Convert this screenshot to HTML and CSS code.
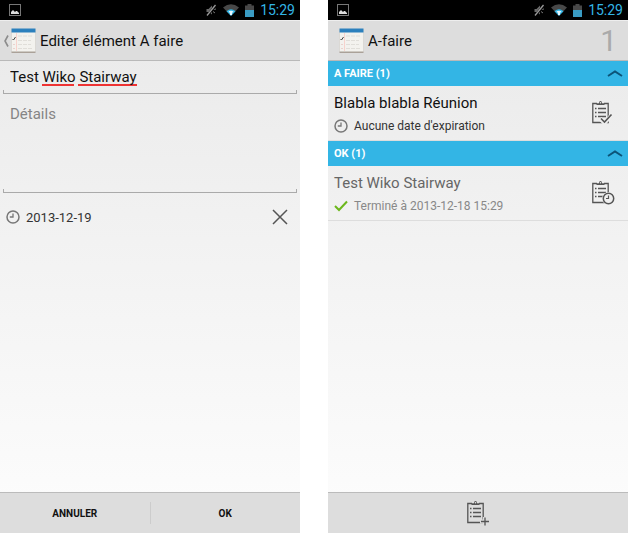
FILE: index.html
```html
<!DOCTYPE html>
<html lang="fr">
<head>
  <meta charset="UTF-8">
  <meta name="viewport" content="width=device-width, initial-scale=1.0">
  <title>A-faire</title>
  <link rel="stylesheet" href="styles.css">
</head>
<body>

<!-- icônes partagées -->
<svg class="sprite" width="0" height="0" aria-hidden="true">
  <symbol id="picture" viewBox="0 0 12 12">
    <rect x="0.5" y="0.5" width="11" height="11" fill="none" stroke="#777"/>
    <path d="M2 10V8l2-2 2 2 1-1h1l2 2v1z" fill="#ddd"/>
  </symbol>
  <symbol id="mute" viewBox="0 0 12 12">
    <path d="M1.500 5h2L7 1.500v9L3.500 8h-2z" fill="#6a6a6a"/>
    <path d="M8 5.500l3-0.500M8 7.500l2 1.500" stroke="#777" fill="none"/>
    <path d="M2 12L11 1" stroke="#000" stroke-width="2.500"/>
    <path d="M2 11.500L10.500 1" stroke="#999" stroke-width="1.300"/>
  </symbol>
  <symbol id="wifi" viewBox="0 0 16 12">
    <path d="M0 3.500Q8 -3 16 3.500L8 12z" fill="#484848"/>
    <path d="M3.500 7.200Q8 3.500 12.500 7.200L8 12z" fill="#33b5e5"/>
    <path d="M5.500 7.500Q8 6 10.500 7.500L9 9v2H7V9z" fill="#e6f7ff"/>
  </symbol>
  <symbol id="battery" viewBox="0 0 9 13">
    <path d="M2.500 0h4v1.500H9V6H0V1.500h2.500z" fill="#484848"/>
    <path d="M0 6h9v7H0z" fill="#3a9cc4"/>
  </symbol>
  <symbol id="app" viewBox="0 0 25 26">
    <path d="M0.500 1h24v24h-24z" fill="#aaa198"/>
    <path d="M0.500 1h24v22.500h-24z" fill="#f3f2ee"/>
    <path d="M0.500 0.500h24V4.500h-24z" fill="#2c80bd"/>
    <path d="M5.500 5v18" stroke="#f7d3cd"/>
    <path d="M7 8h15M7 12.500h13M7 16.500h13M7 20.500h15" stroke="#e0ded9" stroke-dasharray="4 1"/>
    <path d="M1.500 11l1 1 2-3" stroke="#444" fill="none"/>
    <path d="M2 16.500h2M2 20.500h2" stroke="#ead2ce"/>
  </symbol>
  <symbol id="clock" viewBox="0 0 14 14">
    <circle cx="7" cy="7" r="6" fill="none" stroke="currentColor" stroke-width="1.500"/>
    <path d="M7 3.500V7H3.800" fill="none" stroke="currentColor" stroke-width="1.300"/>
  </symbol>
  <symbol id="chevron" viewBox="0 0 16 8">
    <path d="M1 6L8 1.500l7 4.500" fill="none" stroke="#0c5478" stroke-width="2"/>
  </symbol>
  <symbol id="board" viewBox="0 0 24 26">
    <path d="M6 3.500H1.800v19h15.400v-19H13" fill="none" stroke="currentColor" stroke-width="1.300"/>
    <path d="M5.500 5V3.300H8Q8 1 9.500 1T11 3.300h2.500V5z" fill="currentColor"/>
    <circle cx="9.500" cy="2.700" r="0.700" fill="#eee"/>
    <path d="M4 8.500h1.500M4 12.500h1.500M4 16.500h1.500M7 8.500h8M7 12.500h8M7 16.500h8" stroke="currentColor" stroke-width="1.300"/>
  </symbol>
</svg>

<main class="screens">

  <!-- édition d'un élément -->
  <section class="phone">
    <div class="status">
      <svg class="icon-12"><use href="#picture"/></svg>
      <div class="status-right">
        <svg class="icon-12"><use href="#mute"/></svg>
        <svg class="wifi"><use href="#wifi"/></svg>
        <svg class="battery"><use href="#battery"/></svg>
        <span>15:29</span>
      </div>
    </div>
    <header class="bar bar-edit">
      <a class="back" href="#liste" aria-label="Retour">
        <svg width="8" height="14" viewBox="0 0 8 14"><path d="M5 1.500L2 7l3 5.500" fill="none" stroke="#8c8c8c" stroke-width="1.600"/></svg>
        <svg class="app"><use href="#app"/></svg>
      </a>
      <h1>Editer élément A faire</h1>
    </header>
    <form class="edit" id="edition">
      <div class="field">
        <input class="input-title" type="text" aria-label="Titre" value="Test Wiko Stairway" spellcheck="false">
      </div>
      <div class="field">
        <textarea class="input-details" aria-label="Détails" placeholder="Détails"></textarea>
      </div>
      <div class="date-row">
        <svg class="clock"><use href="#clock"/></svg>
        <button class="date" type="button">2013-12-19</button>
        <button class="clear" type="button" aria-label="Effacer la date">
          <svg width="16" height="16" viewBox="0 0 16 16"><path d="M1 1l14 14M15 1L1 15" stroke="#555" stroke-width="1.500"/></svg>
        </button>
      </div>
    </form>
    <footer class="actions">
      <button type="button">ANNULER</button>
      <button type="submit" form="edition">OK</button>
    </footer>
  </section>

  <!-- liste des éléments -->
  <section class="phone" id="liste">
    <div class="status">
      <svg class="icon-12"><use href="#picture"/></svg>
      <div class="status-right">
        <svg class="icon-12"><use href="#mute"/></svg>
        <svg class="wifi"><use href="#wifi"/></svg>
        <svg class="battery"><use href="#battery"/></svg>
        <span>15:29</span>
      </div>
    </div>
    <header class="bar bar-list">
      <svg class="app"><use href="#app"/></svg>
      <h1>A-faire</h1>
      <span class="count">1</span>
    </header>
    <div class="list">
      <button class="group" type="button">
        <span>A FAIRE (1)</span>
        <svg class="chevron"><use href="#chevron"/></svg>
      </button>
      <article class="item">
        <div class="item-text">
          <h2>Blabla blabla Réunion</h2>
          <p><svg class="clock"><use href="#clock"/></svg>Aucune date d'expiration</p>
        </div>
        <button class="item-action" type="button" aria-label="Marquer comme terminé">
          <svg class="board" viewBox="0 0 24 26">
            <use href="#board" width="24" height="26"/>
            <path d="M9 18.500l4.500 4.500 8.500-9.500" fill="none" stroke="#eee" stroke-width="4"/>
            <path d="M10 18.500l3.500 3.500 7-7.500" fill="none" stroke="currentColor" stroke-width="1.600"/>
          </svg>
        </button>
      </article>
      <button class="group" type="button">
        <span>OK (1)</span>
        <svg class="chevron"><use href="#chevron"/></svg>
      </button>
      <article class="item done">
        <div class="item-text">
          <h2>Test Wiko Stairway</h2>
          <p>
            <svg class="clock" viewBox="0 0 14 14"><path d="M1 7l4 4 8-8.500" fill="none" stroke="#6cb71c" stroke-width="2"/></svg>Terminé à 2013-12-18 15:29
          </p>
        </div>
        <button class="item-action" type="button" aria-label="Remettre à faire">
          <svg class="board" viewBox="0 0 24 26">
            <use href="#board" width="24" height="26"/>
            <circle cx="17.500" cy="18.500" r="6.500" fill="#efefef"/>
            <circle cx="17.500" cy="18.500" r="5.200" fill="none" stroke="currentColor" stroke-width="1.500"/>
            <path d="M17.500 15.500v3H15" fill="none" stroke="currentColor" stroke-width="1.200"/>
          </svg>
        </button>
      </article>
    </div>
    <footer class="actions">
      <button type="button" aria-label="Ajouter un élément">
        <svg class="board" viewBox="0 0 24 26">
          <use href="#board" width="24" height="26"/>
          <path d="M14 21.500h9M19 17v9" stroke="#ddd" stroke-width="4"/>
          <path d="M15 21.500h8M19 17.500v8" stroke="currentColor" stroke-width="1.300"/>
        </svg>
      </button>
    </footer>
  </section>

</main>

</body>
</html>
```
FILE: styles.css
```css
* {
  box-sizing: border-box;
}

body {
  font-family: Roboto, "Liberation Sans", sans-serif;
  margin: 0;
  background-color: #fff;
  color: #111;
}

h1, h2, p {
  margin: 0;
  font-weight: 400;
}

button, input, textarea {
  font-family: inherit;
  color: inherit;
  background: none;
  border: 0;
  padding: 0;
  border-radius: 0;
}

button {
  cursor: pointer;
}

svg {
  display: block;
  flex: none;
}

.sprite {
  position: absolute;
}

.screens {
  display: grid;
  grid-template-columns: repeat(2, 1fr);
  gap: 28px;
  min-height: 100vh;
}

.phone {
  display: flex;
  flex-direction: column;
  background: linear-gradient(#e9e9e9, #fdfdfd);
}

/* barre d'état */
.status {
  display: flex;
  align-items: center;
  justify-content: space-between;
  height: 20px;
  padding: 0 5px 0 9px;
  background-color: #000;
  color: #33b5e5;
  font-size: 14px;
}

.status-right {
  display: flex;
  align-items: center;
  gap: 6px;
}

.icon-12 {
  width: 12px;
  height: 12px;
}

.wifi {
  width: 16px;
  height: 12px;
}

.battery {
  width: 9px;
  height: 13px;
}

/* barre de titre */
.bar {
  display: flex;
  align-items: center;
  gap: 4px;
  height: 41px;
  background-color: #ddd;
  border-top: 1px solid #eee;
  border-bottom: 1px solid #b9b9b9;
}

.bar-edit {
  padding: 0 3px;
}

.bar-list {
  padding: 0 11px;
}

.bar h1 {
  flex: 1;
  font-size: 15px;
}

.back {
  display: flex;
  align-items: center;
}

.app {
  width: 25px;
  height: 26px;
}

.count {
  color: #aaa;
  font-size: 30px;
  line-height: 30px;
}

/* formulaire */
.edit {
  flex: 1;
}

.field {
  margin: 0 3px;
  border-bottom: 1px solid #aaa;
  /* petits traits aux extrémités */
  background:
    linear-gradient(#aaa, #aaa) left bottom / 1px 3px no-repeat,
    linear-gradient(#aaa, #aaa) right bottom / 1px 3px no-repeat;
}

.input-title {
  display: block;
  width: 100%;
  height: 32px;
  padding: 0 7px;
  font-size: 15px;
  /* soulignement des mots inconnus */
  background:
    linear-gradient(#e33, #e33) 39px 23px / 32px 2px no-repeat,
    linear-gradient(#e33, #e33) 75px 23px / 59px 2px no-repeat;
}

.input-details {
  display: block;
  width: 100%;
  height: 98px;
  padding: 11px 7px;
  font-size: 15px;
  resize: none;
}

.input-details::placeholder {
  color: #858585;
}

.date-row {
  display: flex;
  align-items: center;
  gap: 6px;
  padding: 16px 12px 16px 6px;
  color: #333;
}

.date {
  flex: 1;
  text-align: left;
  font-size: 13px;
}

.clock {
  width: 14px;
  height: 14px;
  color: #777;
}

/* liste */
.list {
  flex: 1;
}

.group {
  display: flex;
  align-items: center;
  justify-content: space-between;
  width: 100%;
  height: 25px;
  padding: 0 5px 0 6px;
  background-color: #33b5e5;
  color: #fff;
  font-size: 11px;
  font-weight: 700;
}

.chevron {
  width: 16px;
  height: 8px;
}

.item {
  display: flex;
  align-items: center;
  height: 55px;
  padding: 0 13px 0 6px;
  border-bottom: 1px solid #ddd;
}

.item-text {
  flex: 1;
}

.item h2 {
  font-size: 15px;
  line-height: 20px;
}

.item p {
  display: flex;
  align-items: center;
  gap: 6px;
  padding-top: 5px;
  color: #333;
  font-size: 12px;
  line-height: 16px;
}

.done h2 {
  color: #666;
}

.done p {
  color: #888;
}

.item-action {
  color: #555;
}

.board {
  width: 24px;
  height: 26px;
}

/* boutons du bas */
.actions {
  display: flex;
  align-items: center;
  height: 41px;
  background-color: #ddd;
  border-top: 1px solid #bbb;
}

.actions button {
  display: flex;
  align-items: center;
  justify-content: center;
  flex: 1;
  height: 22px;
  color: #111;
  font-size: 10px;
  font-weight: 700;
}

.actions .board {
  color: #555;
}

.actions button + button {
  border-left: 1px solid #ccc;
}
```
